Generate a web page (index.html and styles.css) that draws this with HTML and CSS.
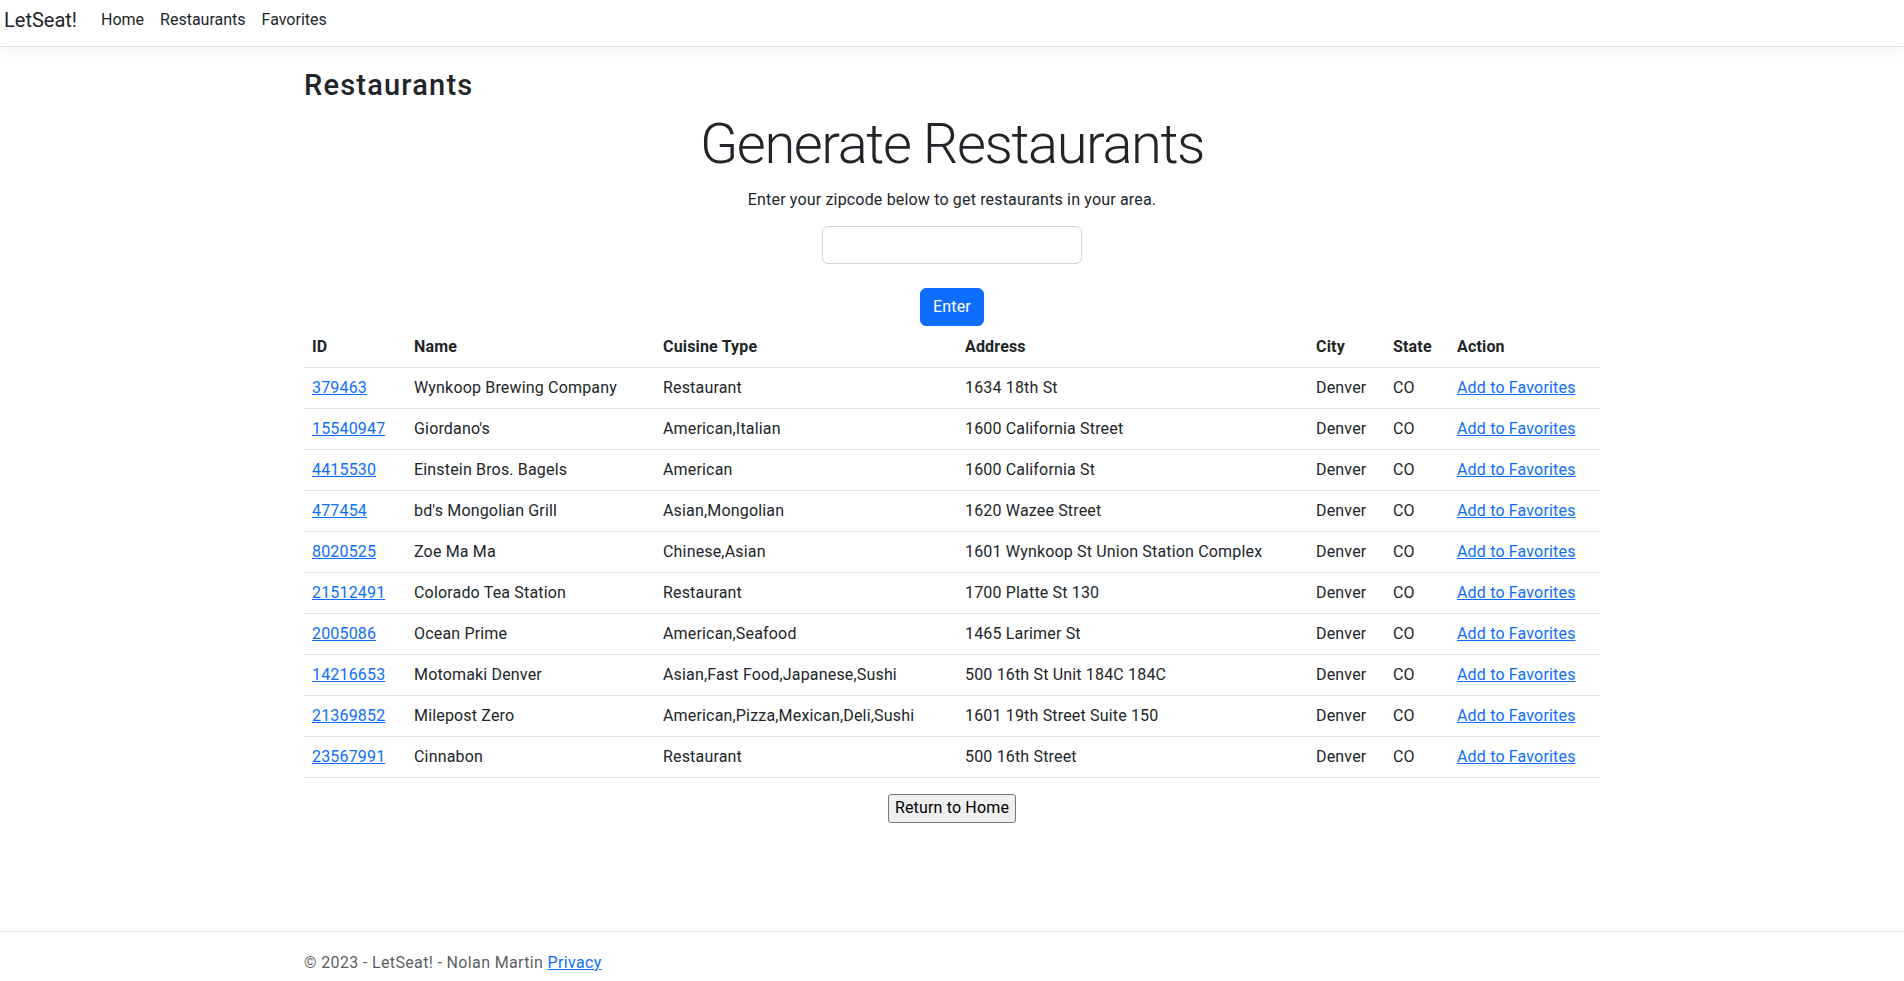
FILE: index.html
```html
<!DOCTYPE html>
<html lang="en">
<head>
<meta charset="utf-8">
<title>Restaurants - LetSeat!</title>
<link rel="stylesheet" href="styles.css">
</head>
<body>
<header class="navbar">
  <a class="brand" href="#">LetSeat!</a>
  <nav class="nav">
    <a class="nav-link" href="#">Home</a>
    <a class="nav-link" href="#">Restaurants</a>
    <a class="nav-link" href="#">Favorites</a>
  </nav>
</header>
<main class="container">
  <h3 class="page-title">Restaurants</h3>
  <div class="hero">
    <h1 class="display">Generate Restaurants</h1>
    <p class="lead-text">Enter your zipcode below to get restaurants in your area.</p>
    <form class="zip-form">
      <input class="form-control" type="text">
      <button class="btn-primary" type="button">Enter</button>
    </form>
  </div>
  <table class="table">
    <colgroup>
      <col class="c-id"><col class="c-name"><col class="c-cuisine"><col class="c-addr"><col class="c-city"><col class="c-state"><col class="c-action">
    </colgroup>
    <thead>
      <tr><th>ID</th><th>Name</th><th>Cuisine Type</th><th>Address</th><th>City</th><th>State</th><th>Action</th></tr>
    </thead>
    <tbody>
      <tr><td><a href="#">379463</a></td><td>Wynkoop Brewing Company</td><td>Restaurant</td><td>1634 18th St</td><td>Denver</td><td>CO</td><td><a href="#">Add to Favorites</a></td></tr>
      <tr><td><a href="#">15540947</a></td><td>Giordano's</td><td>American,Italian</td><td>1600 California Street</td><td>Denver</td><td>CO</td><td><a href="#">Add to Favorites</a></td></tr>
      <tr><td><a href="#">4415530</a></td><td>Einstein Bros. Bagels</td><td>American</td><td>1600 California St</td><td>Denver</td><td>CO</td><td><a href="#">Add to Favorites</a></td></tr>
      <tr><td><a href="#">477454</a></td><td>bd's Mongolian Grill</td><td>Asian,Mongolian</td><td>1620 Wazee Street</td><td>Denver</td><td>CO</td><td><a href="#">Add to Favorites</a></td></tr>
      <tr><td><a href="#">8020525</a></td><td>Zoe Ma Ma</td><td>Chinese,Asian</td><td>1601 Wynkoop St Union Station Complex</td><td>Denver</td><td>CO</td><td><a href="#">Add to Favorites</a></td></tr>
      <tr><td><a href="#">21512491</a></td><td>Colorado Tea Station</td><td>Restaurant</td><td>1700 Platte St 130</td><td>Denver</td><td>CO</td><td><a href="#">Add to Favorites</a></td></tr>
      <tr><td><a href="#">2005086</a></td><td>Ocean Prime</td><td>American,Seafood</td><td>1465 Larimer St</td><td>Denver</td><td>CO</td><td><a href="#">Add to Favorites</a></td></tr>
      <tr><td><a href="#">14216653</a></td><td>Motomaki Denver</td><td>Asian,Fast Food,Japanese,Sushi</td><td>500 16th St Unit 184C 184C</td><td>Denver</td><td>CO</td><td><a href="#">Add to Favorites</a></td></tr>
      <tr><td><a href="#">21369852</a></td><td>Milepost Zero</td><td>American,Pizza,Mexican,Deli,Sushi</td><td>1601 19th Street Suite 150</td><td>Denver</td><td>CO</td><td><a href="#">Add to Favorites</a></td></tr>
      <tr><td><a href="#">23567991</a></td><td>Cinnabon</td><td>Restaurant</td><td>500 16th Street</td><td>Denver</td><td>CO</td><td><a href="#">Add to Favorites</a></td></tr>
    </tbody>
  </table>
  <div class="home-row">
    <button class="btn-plain" type="button">Return to Home</button>
  </div>
</main>
<footer class="footer">
  <div class="container">&copy; 2023 - LetSeat! - Nolan Martin <a href="#">Privacy</a></div>
</footer>
</body>
</html>
```

FILE: styles.css
```css
* { box-sizing: border-box; }

html, body {
  margin: 0;
  padding: 0;
}

body {
  font-family: Roboto, Inter, "Liberation Sans", sans-serif;
  font-size: 16px;
  line-height: 24px;
  letter-spacing: 0.17px;
  color: #212529;
  background: #fff;
  height: 981px;
  overflow: hidden;
  display: flex;
  flex-direction: column;
}

a { color: #0d6efd; text-decoration: underline; }

.navbar {
  display: flex;
  align-items: center;
  height: 47px;
  padding: 0 4px 6px;
  border-bottom: 1px solid #dee2e6;
  box-shadow: 0 4px 12px rgba(0, 0, 0, 0.05);
  background: #fff;
}

.brand {
  font-size: 20px;
  line-height: 30px;
  letter-spacing: 0;
  color: #212529;
  text-decoration: none;
  margin-right: 16px;
}

.nav { display: flex; }

.nav-link {
  color: #212529;
  text-decoration: none;
  padding: 0 8px;
  line-height: 24px;
  letter-spacing: 0;
}

.container {
  width: 1320px;
  margin: 0 auto;
  padding: 0 12px;
}

main.container {
  flex: 1;
  padding-top: 16px;
}

.page-title {
  margin: 5px 0 9px;
  font-size: 29px;
  font-weight: 500;
  line-height: 34px;
  letter-spacing: 1.2px;
}

.hero {
  display: flex;
  flex-direction: column;
  align-items: center;
}

.display {
  margin: 0 0 10px;
  font-size: 56px;
  font-weight: 300;
  line-height: 1.2;
  letter-spacing: -1.4px;
}

.lead-text {
  margin: 0 0 14px;
}

.zip-form {
  display: flex;
  flex-direction: column;
  align-items: center;
  gap: 24px;
  margin: 0 0 1px;
}

.form-control {
  width: 260px;
  height: 38px;
  border: 1px solid #ced4da;
  border-radius: 6px;
  padding: 6px 12px;
  font: inherit;
}

.btn-primary {
  height: 38px;
  padding: 6px 12px;
  border: 1px solid #0d6efd;
  border-radius: 6px;
  background: #0d6efd;
  color: #fff;
  font: inherit;
  letter-spacing: 0.17px;
}

.table {
  width: 100%;
  border-collapse: collapse;
  table-layout: fixed;
  margin: 0 0 16px;
}

.c-id { width: 102px; }
.c-name { width: 249px; }
.c-cuisine { width: 302px; }
.c-addr { width: 351px; }
.c-city { width: 77px; }
.c-state { width: 64px; }
.c-action { width: 151px; }

.table th, .table td {
  padding: 8px;
  text-align: left;
  border-bottom: 1px solid #dee2e6;
  white-space: nowrap;
}

.table th { font-weight: 700; }

.home-row {
  display: flex;
  justify-content: center;
}

.btn-plain {
  font: inherit;
  letter-spacing: 0.17px;
  color: #000;
  background: #efefef;
  border: 1px solid #767676;
  border-radius: 3px;
  padding: 1px 6px 2px;
  height: 29px;
}

.footer {
  border-top: 1px solid #dee2e6;
  height: 50px;
  padding-top: 19px;
  color: rgba(33, 37, 41, 0.75);
  white-space: nowrap;
  letter-spacing: 0.35px;
}
```
